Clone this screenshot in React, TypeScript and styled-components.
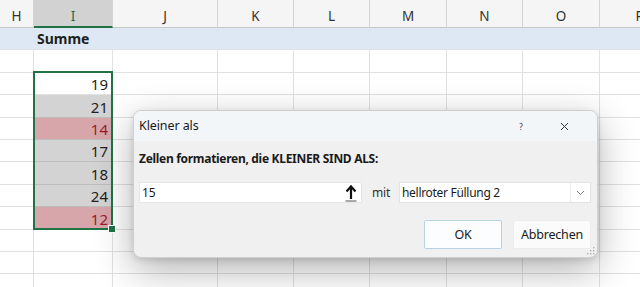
import React from 'react';
import styled, { createGlobalStyle } from 'styled-components';

const GlobalStyle = createGlobalStyle`
  html, body { margin: 0; padding: 0; background: #ffffff; overflow: hidden; }
  body { font-family: "Noto Sans", "Open Sans", sans-serif; }
  #root { width: 640px; height: 287px; position: relative; overflow: hidden; }
`;

type Col = { key: string; w: number };
const cols: Col[] = [
  { key: 'H', w: 34 },
  { key: 'I', w: 79 },
  { key: 'J', w: 105 },
  { key: 'K', w: 76 },
  { key: 'L', w: 76 },
  { key: 'M', w: 77 },
  { key: 'N', w: 76 },
  { key: 'O', w: 77 },
  { key: 'P', w: 80 },
];

type Fill = 'none' | 'gray' | 'red' | 'active';
type RowData = { value?: string; fill: Fill; band?: boolean; label?: string };
const rows: RowData[] = [
  { fill: 'none', band: true, label: 'Summe' },
  { fill: 'none' },
  { value: '19', fill: 'active' },
  { value: '21', fill: 'gray' },
  { value: '14', fill: 'red' },
  { value: '17', fill: 'gray' },
  { value: '18', fill: 'gray' },
  { value: '24', fill: 'gray' },
  { value: '12', fill: 'red' },
  { fill: 'none' },
  { fill: 'none' },
  { fill: 'none' },
];

const Sheet = styled.div`
  position: relative;
  width: 700px;
  display: flex;
  flex-direction: column;
`;

const HeaderRow = styled.div`
  display: flex;
  height: 28px;
  background: #f5f5f5;
`;

const HeaderCell = styled.div<{ $w: number; $sel?: boolean }>`
  box-sizing: border-box;
  width: ${(p) => p.$w}px;
  flex: none;
  height: 28px;
  border-right: 1px solid #d4d4d4;
  border-bottom: ${(p) => (p.$sel ? '2px solid #217346' : '1px solid #c8c8c8')};
  background: ${(p) => (p.$sel ? '#d2d2d2' : '#f5f5f5')};
  color: ${(p) => (p.$sel ? '#1e6b40' : '#333333')};
  font-size: 13.5px;
  display: flex;
  align-items: center;
  justify-content: center;
  padding-top: 5px;
`;

const Row = styled.div<{ $band?: boolean }>`
  display: flex;
  height: 22.4px;
  background: ${(p) => (p.$band ? '#dde8f4' : 'transparent')};
`;

const fillBg: Record<Fill, string> = {
  none: 'transparent',
  gray: '#d3d3d3',
  red: '#d6a6ab',
  active: '#ffffff',
};

const Cell = styled.div<{ $w: number; $fill: Fill; $band?: boolean }>`
  box-sizing: border-box;
  width: ${(p) => p.$w}px;
  flex: none;
  height: 100%;
  border-right: 1px solid ${(p) => (p.$band ? '#dde8f4' : '#e1e1e1')};
  border-bottom: 1px solid ${(p) => (p.$fill === 'gray' || p.$fill === 'red' ? '#bdbdbd' : '#e1e1e1')};
  background: ${(p) => fillBg[p.$fill]};
  color: ${(p) => (p.$fill === 'red' ? '#9c1c2a' : '#1f1f1f')};
  font-size: 15px;
  display: flex;
  align-items: flex-end;
  justify-content: flex-end;
  padding: 0 4px 0 4px;
  line-height: 20px;
`;

const LabelCell = styled(Cell)`
  justify-content: flex-start;
  align-items: center;
  font-weight: 700;
  font-size: 14px;
  color: #1f1f1f;
  line-height: normal;
  padding-left: 3px;
`;

const Selection = styled.div`
  position: absolute;
  left: 33px;
  top: 71px;
  width: 80px;
  height: 159px;
  box-sizing: border-box;
  border: 2px solid #217346;
  pointer-events: none;
`;

const FillHandle = styled.div`
  position: absolute;
  right: -5px;
  bottom: -5px;
  width: 6px;
  height: 6px;
  background: #217346;
  border: 1px solid #ffffff;
`;

const Dialog = styled.div`
  position: absolute;
  left: 133px;
  top: 110px;
  width: 465px;
  height: 148px;
  box-sizing: border-box;
  background: #f0f0f0;
  border: 1px solid #cfcfcf;
  border-radius: 8px;
  box-shadow: 0 12px 38px rgba(0, 0, 0, 0.3), 0 2px 6px rgba(0, 0, 0, 0.12);
  display: flex;
  flex-direction: column;
  overflow: hidden;
  font-family: "Noto Sans", "Open Sans", sans-serif;
  color: #1a1a1a;
`;

const TitleBar = styled.div`
  height: 30px;
  flex: none;
  display: flex;
  align-items: center;
  background: #f3f6f9;
  padding-left: 5px;
`;

const Title = styled.div`
  flex: 1;
  font-size: 12.5px;
  letter-spacing: -0.1px;
  padding-bottom: 1px;
`;

const TitleButton = styled.div<{ $w: number }>`
  width: ${(p) => p.$w}px;
  display: flex;
  justify-content: center;
  align-items: center;
  font-size: 8px;
  color: #333;
`;

const Body = styled.div`
  flex: 1;
  display: flex;
  flex-direction: column;
  padding: 9px 6px 0 5px;
`;

const Prompt = styled.div`
  font-weight: 700;
  font-size: 12px;
  letter-spacing: -0.3px;
  height: 18px;
  line-height: 18px;
`;

const InputRow = styled.div`
  display: flex;
  align-items: center;
  margin-top: 14px;
  height: 21px;
`;

const TextInput = styled.div`
  box-sizing: border-box;
  width: 223px;
  height: 21px;
  background: #ffffff;
  border: 1px solid #e6e6e6;
  display: flex;
  align-items: center;
  padding-left: 2px;
  font-size: 12px;
`;

const InputText = styled.span`
  flex: 1;
`;

const RefButton = styled.div`
  width: 14px;
  height: 19px;
  margin-right: 3px;
  display: flex;
  align-items: center;
  justify-content: center;
`;

const MitLabel = styled.div`
  width: 37px;
  box-sizing: border-box;
  padding-left: 10px;
  font-size: 12px;
  letter-spacing: -0.2px;
  color: #333;
`;

const Select = styled.div`
  box-sizing: border-box;
  width: 192px;
  height: 21px;
  background: #ffffff;
  border: 1px solid #e3e3e3;
  display: flex;
  align-items: center;
`;

const SelectText = styled.div`
  flex: 1;
  padding-left: 2px;
  font-size: 12px;
  letter-spacing: -0.3px;
`;

const Chevron = styled.div`
  width: 19px;
  height: 100%;
  border-left: 1px solid #ececec;
  display: flex;
  align-items: center;
  justify-content: center;
`;

const ButtonRow = styled.div`
  display: flex;
  justify-content: flex-end;
  gap: 11px;
  margin-top: 17px;
`;

const Button = styled.div<{ $primary?: boolean }>`
  box-sizing: border-box;
  width: 78px;
  height: 29px;
  display: flex;
  align-items: center;
  justify-content: center;
  font-size: 12.5px;
  letter-spacing: -0.2px;
  color: #1a1a1a;
  background: ${(p) => (p.$primary ? '#fbfdfe' : '#fbfbfb')};
  border: 1px solid ${(p) => (p.$primary ? '#b9d3e6' : '#ececec')};
  border-radius: 2px;
`;

const Grip = styled.div`
  position: absolute;
  right: 2px;
  bottom: 2px;
  width: 9px;
  height: 9px;
  display: flex;
`;

export default function App() {
  return (
    <>
      <GlobalStyle />
      <Sheet>
        <HeaderRow>
          {cols.map((c) => (
            <HeaderCell key={c.key} $w={c.w} $sel={c.key === 'I'}>
              {c.key}
            </HeaderCell>
          ))}
        </HeaderRow>
        {rows.map((r, ri) => (
          <Row key={ri} $band={r.band}>
            {cols.map((c) => {
              if (c.key === 'I' && r.label) {
                return (
                  <LabelCell key={c.key} $w={c.w} $fill="none" $band>
                    {r.label}
                  </LabelCell>
                );
              }
              const isI = c.key === 'I';
              return (
                <Cell key={c.key} $w={c.w} $fill={isI ? r.fill : 'none'} $band={r.band}>
                  {isI ? r.value : null}
                </Cell>
              );
            })}
          </Row>
        ))}
        <Selection>
          <FillHandle />
        </Selection>
      </Sheet>

      <Dialog>
        <TitleBar>
          <Title>Kleiner als</Title>
          <TitleButton $w={20}>?</TitleButton>
          <TitleButton $w={66}>
            <svg width="9" height="9" viewBox="0 0 9 9">
              <path d="M1 1 L8 8 M8 1 L1 8" stroke="#333" strokeWidth="1" />
            </svg>
          </TitleButton>
        </TitleBar>
        <Body>
          <Prompt>Zellen formatieren, die KLEINER SIND ALS:</Prompt>
          <InputRow>
            <TextInput>
              <InputText>15</InputText>
              <RefButton>
                <svg width="14" height="18" viewBox="0 0 14 18">
                  <path d="M7 15 V3" stroke="#111" strokeWidth="2.2" />
                  <path d="M2.5 7.5 L7 2.5 L11.5 7.5" stroke="#111" strokeWidth="2.2" fill="none" />
                  <path d="M1.5 17 H12.5" stroke="#555" strokeWidth="1.2" />
                </svg>
              </RefButton>
            </TextInput>
            <MitLabel>mit</MitLabel>
            <Select>
              <SelectText>hellroter Füllung 2</SelectText>
              <Chevron>
                <svg width="9" height="6" viewBox="0 0 9 6">
                  <path d="M1 1 L4.5 4.5 L8 1" stroke="#777" strokeWidth="1" fill="none" />
                </svg>
              </Chevron>
            </Select>
          </InputRow>
          <ButtonRow>
            <Button $primary>OK</Button>
            <Button>Abbrechen</Button>
          </ButtonRow>
        </Body>
        <Grip>
          <svg width="9" height="9" viewBox="0 0 9 9">
            <rect x="7" y="1" width="1.4" height="1.4" fill="#b0b0b0" />
            <rect x="4" y="4" width="1.4" height="1.4" fill="#b0b0b0" />
            <rect x="7" y="4" width="1.4" height="1.4" fill="#b0b0b0" />
            <rect x="1" y="7" width="1.4" height="1.4" fill="#b0b0b0" />
            <rect x="4" y="7" width="1.4" height="1.4" fill="#b0b0b0" />
            <rect x="7" y="7" width="1.4" height="1.4" fill="#b0b0b0" />
          </svg>
        </Grip>
      </Dialog>
    </>
  );
}
